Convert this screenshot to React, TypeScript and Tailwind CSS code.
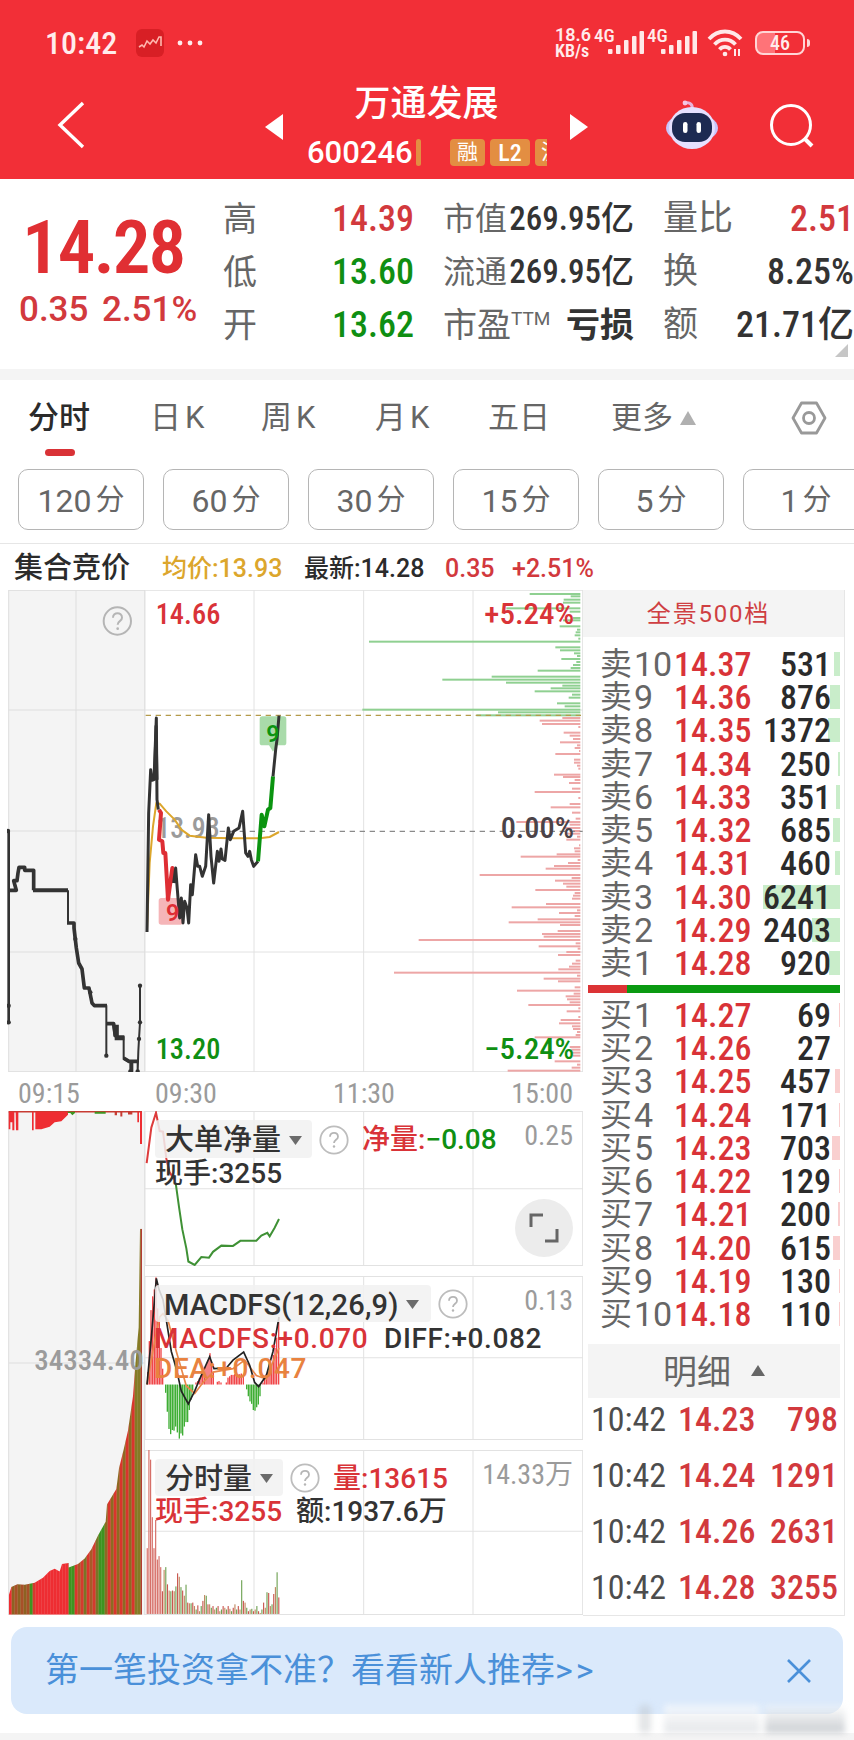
import React from 'react';
import clsx from 'clsx';

const INK = '#333333';
const RED = '#d93338';
const GREEN = '#0f8f12';

const asks: [string, string, number, number][] = [
  ['10', '14.37', 531, 6],
  ['9', '14.36', 876, 10],
  ['8', '14.35', 1372, 12],
  ['7', '14.34', 250, 2],
  ['6', '14.33', 351, 4],
  ['5', '14.32', 685, 7],
  ['4', '14.31', 460, 5],
  ['3', '14.30', 6241, 77],
  ['2', '14.29', 2403, 28],
  ['1', '14.28', 920, 11],
];

const bids: [string, string, number, number][] = [
  ['1', '14.27', 69, 1],
  ['2', '14.26', 27, 0],
  ['3', '14.25', 457, 5],
  ['4', '14.24', 171, 1],
  ['5', '14.23', 703, 8],
  ['6', '14.22', 129, 1],
  ['7', '14.21', 200, 2],
  ['8', '14.20', 615, 7],
  ['9', '14.19', 130, 1],
  ['10', '14.18', 110, 1],
];

const trades: [string, string, number][] = [
  ['10:42', '14.23', 798],
  ['10:42', '14.24', 1291],
  ['10:42', '14.26', 2631],
  ['10:42', '14.28', 3255],
];

// order depth along the price axis: [y, left edge]
const sellDepth = [
  [43, 720], [50, 843], [60, 822], [69, 820], [86, 650], [96, 840], [115, 850], [122, 820], [140, 810],
  [150, 862], [158, 858], [167, 855], [177, 866], [186, 238], [203, 797], [212, 811], [221, 853], [229, 862],
  [238, 815], [247, 860], [256, 850], [265, 843], [273, 744], [291, 606], [300, 458], [309, 649], [318, 818],
  [326, 783], [335, 735], [345, 847], [354, 837], [371, 802], [380, 825], [390, 218], [398, 625], [407, 560],
];

const buyDepth = [
  [415, 818], [423, 750], [433, 757], [442, 866], [459, 822], [468, 840], [478, 850], [488, 811], [497, 862],
  [505, 855], [514, 868], [523, 797], [540, 853], [549, 853], [558, 862], [567, 866], [585, 793], [592, 820],
  [601, 855], [610, 838], [627, 847], [637, 735], [655, 866], [673, 840], [683, 783], [699, 847], [717, 858],
  [727, 680], [735, 840], [745, 820], [754, 850], [762, 830], [771, 862], [780, 830], [797, 868], [806, 853],
  [815, 855], [824, 801], [831, 693], [841, 864], [850, 835], [859, 793], [867, 768], [886, 570], [895, 846],
  [903, 796], [912, 820], [921, 830], [931, 737], [940, 855], [948, 850], [957, 847], [973, 769], [983, 666],
  [992, 862], [1000, 808], [1009, 855], [1019, 744], [1028, 657], [1036, 811], [1054, 804], [1063, 757],
  [1071, 762], [1081, 387], [1091, 858], [1100, 747], [1107, 864], [1117, 830], [1126, 805], [1143, 858],
  [1152, 847], [1161, 838], [1169, 806], [1179, 313], [1188, 862], [1197, 762], [1205, 805], [1223, 855],
  [1233, 682], [1242, 852], [1250, 828], [1259, 832], [1268, 840], [1276, 716], [1286, 866], [1295, 831],
  [1312, 866], [1321, 813], [1331, 808], [1340, 847], [1348, 850], [1357, 862], [1366, 858], [1373, 735],
  [1402, 840], [1410, 845], [1419, 848], [1428, 850], [1445, 795], [1455, 862], [1464, 846], [1473, 654],
];

const volumeTops = [
  1362, 1077, 1105, 1272, 1362, 1280, 1395, 1385, 1417, 1487, 1425, 1417, 1467, 1485, 1487, 1485, 1487, 1473,
  1435, 1445, 1475, 1485, 1500, 1468, 1520, 1522, 1522, 1520, 1530, 1540, 1528, 1545, 1530, 1515, 1498, 1500,
  1525, 1525, 1535, 1530, 1540, 1535, 1530, 1545, 1540, 1530, 1535, 1540, 1530, 1538, 1545, 1535, 1525, 1540,
  1530, 1540, 1455, 1515, 1520, 1535, 1545, 1540, 1538, 1545, 1540, 1530, 1545, 1550, 1540, 1520, 1535, 1490,
  1492, 1530, 1525, 1495, 1475, 1432, 1505,
];

// MACD histogram, [x, end y] around the zero line at 886
const macdBars = [
  [444, 850], [449, 760], [454, 670], [459, 630], [464, 610], [469, 575], [474, 665], [479, 700], [484, 780], [489, 840],
  [498, 910], [503, 965], [508, 1015], [513, 1030], [518, 1018], [523, 1020], [528, 1008], [533, 1025],
  [539, 1043], [544, 1028], [549, 1034], [554, 1008], [559, 995], [564, 995], [569, 960], [574, 930], [579, 905],
  [589, 880], [594, 876], [599, 868], [604, 860], [609, 855], [614, 850], [619, 830], [625, 815], [631, 795],
  [636, 822], [641, 850], [653, 878], [658, 876], [664, 880], [680, 880], [685, 866], [690, 862], [695, 858],
  [700, 858], [705, 856], [710, 856], [715, 856], [720, 856], [725, 854], [731, 860],
  [741, 900], [746, 920], [751, 935], [756, 942], [761, 960], [766, 962], [771, 952], [776, 944], [781, 920],
  [790, 880], [795, 870], [800, 855], [805, 850], [811, 845], [816, 830], [821, 800], [826, 780], [831, 750], [837, 690],
];

const auctionStripes = Array.from({ length: 45 }, (_, i) => {
  const x = 27 + i * 9;
  let fill = ['#d43a2e', '#a85a28', '#d9352c', '#7a7426'][(i * 3) % 4];
  if (x < 33 || (x >= 105 && x < 200)) fill = '#ee2d32';
  else if ((x >= 85 && x < 96) || (x >= 200 && x < 223) || (x >= 295 && x < 311)) fill = '#3e9420';
  else if (x >= 34 && x < 85) fill = i % 2 ? '#8d6222' : '#a85028';
  else if (x >= 311 && x < 400) fill = i % 2 ? '#d9352c' : '#8d6a22';
  else if (x >= 400 && x < 417) fill = '#857a25';
  else if (x >= 417) fill = '#b33c33';
  return { x, fill };
});

interface ChartTextProps {
  x: number;
  y: number;
  width: number;
  size?: number;
  fill: string;
  children: string;
}

const ChartText = ({ x, y, width, size = 86, fill, children }: ChartTextProps) => (
  <text x={x} y={y} fontSize={size} fill={fill} fontWeight={480} textLength={width} lengthAdjust="spacingAndGlyphs">
    {children}
  </text>
);

const Help = ({ className }: { className?: string }) => (
  <svg viewBox="0 0 30 30" className={clsx('size-[30px] shrink-0', className)} fill="none">
    <circle cx="15" cy="15" r="13.7" stroke="#bdbdbd" strokeWidth="1.8" />
    <path d="M11 11.7c0-5.2 8-5.2 8 0 0 3.2-4 3-4 6.3" stroke="#b5b5b5" strokeWidth="1.8" />
    <circle cx="15" cy="21.5" r="1.2" fill="#b5b5b5" />
  </svg>
);

const CaretDown = () => (
  <svg viewBox="0 0 13 9" className="h-[9px] w-[13px] shrink-0">
    <path d="M0 0H13L6.5 9Z" fill="#6b6b6b" />
  </svg>
);

const Signal = () => (
  <svg viewBox="0 0 36 24" className="h-6 w-9 shrink-0" fill="#ffe9e9">
    <rect x="0" y="18" width="4.5" height="5" rx="1" />
    <rect x="8" y="14" width="4.5" height="9" rx="1" />
    <rect x="16" y="9" width="4.5" height="14" rx="1" />
    <rect x="24" y="5" width="4.5" height="18" rx="1" />
    <rect x="31.5" y="0" width="4.5" height="23" rx="1" />
  </svg>
);

const StatusBar = () => (
  <div className="flex h-[86px] items-center pl-[45px] text-[#ffecec]">
    <span className="w-[77px] text-[32px] leading-none font-[480] whitespace-nowrap [font-stretch:87%]">10:42</span>
    <div className="ml-[14px] flex size-7 items-center justify-center rounded-md bg-[#d81f25]">
      <svg viewBox="0 0 24 16" className="h-4 w-6" fill="none" stroke="#ffb9b0" strokeWidth="1.6">
        <path d="M1 12l3-2 2 2 3-6 3 3 3-4 3 3 3-6 2 0v9" />
      </svg>
    </div>
    <svg viewBox="0 0 26 6" className="ml-[13px] h-[6px] w-[26px]" fill="#ffecec">
      <circle cx="3" cy="3" r="2.4" />
      <circle cx="13" cy="3" r="2.4" />
      <circle cx="23" cy="3" r="2.4" />
    </svg>
    <div className="ml-[352px] w-[39px] text-[18px] leading-[16px] font-semibold whitespace-nowrap">
      <div className="[font-stretch:96%]">18.6</div>
      <div>KB/s</div>
    </div>
    <span className="mb-4 w-[14px] text-[19px] leading-none font-medium [font-stretch:80%]">4G</span>
    <Signal />
    <span className="mb-4 ml-[3px] w-[14px] text-[19px] leading-none font-medium [font-stretch:80%]">4G</span>
    <Signal />
    <svg viewBox="0 0 36 28" className="ml-[10px] h-7 w-9 shrink-0" fill="none" stroke="#ffe9e9" strokeWidth="3.8">
      <path d="M2 10C11 0 25 0 34 10" />
      <path d="M7.5 15.5C13.5 9 22.5 9 28.5 15.5" />
      <path d="M12.5 20.5C15.5 17 20.5 17 23.5 20.5" />
      <circle cx="18" cy="25" r="1.6" fill="#ffe9e9" strokeWidth="1.5" />
      <path d="M28 20v7M32 20v7" strokeWidth="2" />
    </svg>
    <div className="ml-[12px] flex h-6 w-[50px] items-center justify-center rounded-lg border-2 border-[#ffd6d6] bg-linear-to-r from-[#ff7378] from-40% to-transparent to-40% text-[20px] leading-none font-medium">
      46
    </div>
    <div className="ml-[2px] h-2 w-[3px] rounded-r bg-[#ffd6d6]" />
  </div>
);

const Robot = () => (
  <svg viewBox="0 0 52 50" className="h-[50px] w-[52px]">
    <path d="M26 9C27 5 24 2 20 3" fill="none" stroke="#e9b2da" strokeWidth="3" strokeLinecap="round" />
    <circle cx="19" cy="3" r="2.4" fill="#f4c6e2" />
    <ellipse cx="26" cy="28" rx="26" ry="15" fill="#c9c4fa" />
    <ellipse cx="26" cy="28" rx="23" ry="21" fill="#e6e0ff" />
    <rect x="6" y="13" width="40" height="29" rx="13" fill="#1d2a52" />
    <rect x="17" y="22" width="4.5" height="11" rx="2.2" fill="#fff" />
    <rect x="30.5" y="22" width="4.5" height="11" rx="2.2" fill="#fff" />
  </svg>
);

const Header = () => (
  <div className="flex h-[93px] items-start">
    <svg viewBox="0 0 28 48" className="mt-[15px] ml-[57px] h-12 w-7" fill="none" stroke="#fff" strokeWidth="3.4">
      <path d="M26 2L3 24L26 46" />
    </svg>
    <svg viewBox="0 0 18 26" className="mt-[28px] ml-[180px] h-[26px] w-[18px]">
      <path d="M18 0V26L0 13Z" fill="#fff" />
    </svg>
    <div className="flex w-[287px] flex-col items-center">
      <div className="text-[36px] leading-[36px] font-medium text-white">万通发展</div>
      <div className="mt-[17px] flex h-[27px] w-full items-center pl-[24px] text-[15px] text-white">
        <span className="w-[100px] text-[31px] leading-none font-[480] whitespace-nowrap [font-stretch:89%]">600246</span>
        <i className="ml-[9px] h-full w-[5px] rounded-sm bg-[#e38e42]" />
        <span className="ml-[29px] flex h-full w-[35px] items-center justify-center rounded-sm bg-[#e38e42] text-[21px]">融</span>
        <span className="ml-[5px] flex h-full w-10 items-center justify-center rounded-sm bg-[#e38e42] text-[24px] font-[480]">L2</span>
        <span className="ml-[5px] flex h-full w-3 items-center overflow-hidden rounded-l-sm bg-[#e38e42] pl-[6px] text-[21px]">沪</span>
      </div>
    </div>
    <svg viewBox="0 0 18 26" className="mt-[28px] h-[26px] w-[18px]">
      <path d="M0 0V26L18 13Z" fill="#fff" />
    </svg>
    <div className="mt-[14px] ml-[78px]">
      <Robot />
    </div>
    <svg viewBox="0 0 46 46" className="mt-[17px] ml-[51px] size-[46px]" fill="none" stroke="#fff" strokeWidth="3">
      <circle cx="22" cy="22" r="19.5" />
      <path d="M36 36L43 43" strokeWidth="4" />
    </svg>
  </div>
);

const Stat = ({ label, value, className }: { label: React.ReactNode; value: string; className: string }) => (
  <div className="flex h-[53px] items-center justify-between">
    <span className="flex items-start leading-none">{label}</span>
    <b className={clsx('leading-none', className)}>{value}</b>
  </div>
);

const Quote = () => (
  <div className="relative flex h-[190px] overflow-hidden bg-white pt-[13px]">
    <div className="w-[223px] shrink-0">
      <div className="mt-[18px] ml-[22px] text-[75px] leading-[74px] font-semibold tracking-[-2px] whitespace-nowrap text-[#e02f33] [font-stretch:80%]">
        14.28
      </div>
      <div className="mt-[7px] ml-[19px] flex text-[35px] leading-[37px] font-[480] text-[#d2393d] [font-stretch:88%]">
        <span className="w-[83px]">0.35</span>
        <span>2.51%</span>
      </div>
    </div>
    <div className="w-[191px] shrink-0 text-[34px] whitespace-nowrap text-[#666]">
      <Stat label="高" value="14.39" className="text-[36px] font-[480] text-[#d2393d]" />
      <Stat label="低" value="13.60" className="text-[36px] font-[480] text-[#0f8f12]" />
      <Stat label="开" value="13.62" className="text-[36px] font-[480] text-[#0f8f12]" />
    </div>
    <div className="ml-[29px] w-[191px] shrink-0 text-[32px] whitespace-nowrap text-[#666]">
      <Stat label="市值" value="269.95亿" className="text-[33px] font-[480] text-[#333]" />
      <Stat label="流通" value="269.95亿" className="text-[33px] font-[480] text-[#333]" />
      <Stat
        label={
          <>
            <span className="text-[34px]">市盈</span>
            <small className="mt-[1px] text-[19px] leading-none [font-stretch:100%]">TTM</small>
          </>
        }
        value="亏损"
        className="text-[34px] font-bold text-[#333]"
      />
    </div>
    <div className="ml-[29px] w-[191px] shrink-0 text-[35px] whitespace-nowrap text-[#666]">
      <Stat label="量比" value="2.51" className="text-[36px] font-[480] text-[#d2393d]" />
      <Stat label="换" value="8.25%" className="text-[36px] font-[480] text-[#333] [font-stretch:87%]" />
      <Stat label="额" value="21.71亿" className="text-[36px] font-[480] text-[#333]" />
    </div>
    <svg viewBox="0 0 13 13" className="absolute right-[6px] bottom-[12px] size-[13px]">
      <path d="M13 0V13H0Z" fill="#c6c6c6" />
    </svg>
  </div>
);

const Tabs = () => (
  <div className="flex h-[89px] items-start pt-[15px] text-[31px] leading-[46px] whitespace-nowrap text-[#666]">
    <div className="ml-[28px] w-[122px] font-medium text-[#2b2b2b]">
      分时
      <div className="mt-[8px] ml-[17px] h-[7px] w-[30px] rounded-full bg-[#d93236]" />
    </div>
    <span className="w-[111px] tracking-[4px] [font-stretch:100%]">日K</span>
    <span className="w-[114px] tracking-[4px] [font-stretch:100%]">周K</span>
    <span className="w-[113px] tracking-[4px] [font-stretch:100%]">月K</span>
    <span className="w-[123px]">五日</span>
    <span className="flex w-[180px] items-center gap-[7px]">
      更多
      <svg viewBox="0 0 16 14" className="h-[14px] w-4">
        <path d="M8 0L16 14H0Z" fill="#b0b0b0" />
      </svg>
    </span>
    <svg viewBox="0 0 36 34" className="mt-[6px] h-[34px] w-9" fill="none" stroke="#999" strokeWidth="2.8">
      <path d="M10.5 2H25.5L34 17L25.5 32H10.5L2 17Z" strokeLinejoin="round" />
      <circle cx="18" cy="17" r="5.5" />
    </svg>
  </div>
);

const Periods = () => (
  <div className="flex h-[75px] gap-[19px] overflow-hidden border-b border-[#e6e6e6] pl-[18px]">
    {['120', '60', '30', '15', '5', '1'].map((n) => (
      <div
        key={n}
        className="flex h-[61px] w-[126px] shrink-0 items-center justify-center rounded-[10px] border border-[#b5b5b5] pt-[2px] text-[32px] text-[#666] [font-stretch:89%]"
      >
        {n}
        <span className="ml-[4px] text-[29px]">分</span>
      </div>
    ))}
  </div>
);

const AuctionPrice = () => (
  <svg viewBox="22 31 414 1446" className="h-[482px] w-[138px]" preserveAspectRatio="none">
    <rect x="27" y="31" width="409" height="1446" fill="#f4f4f4" />
    <path d="M27 31V1477M229 31V1477M435 31V1477M27 32H436M27 391H436M27 754H436M27 1117H436M27 1476H436" stroke="#dedede" strokeWidth="3" />
    <g fill="none" stroke="#333" strokeWidth="6" strokeLinejoin="round">
      <path d="M27 752V1328" strokeWidth="8" />
      <path d="M27 932H50L42 903H52L55 880L58 863H75V872H102V932" strokeWidth="11" />
      <path d="M100 932H205" strokeWidth="12" />
      <path d="M205 932V1030H223L226 1075L230 1105L237 1150L247 1168L254 1225H266L272 1245L277 1270L283 1278H320V1428V1330H340L345 1370H372V1438L385 1445H392V1475H398V1447H414V1475L416 1415L418 1378L421 1328V1218" />
      <path d="M202 1030H223V1045L230 1105L237 1150L247 1168L254 1225H268L277 1270L284 1278H322M320 1332H342L347 1370M352 1335V1372M345 1376H374M372 1435L388 1445H416" strokeWidth="11" />
    </g>
    {[[25, 754], [27, 1278], [27, 1328], [320, 1428], [421, 1218], [421, 1328], [418, 1378], [392, 1475], [414, 1475], [227, 1078], [272, 1238]].map(([x, y]) => (
      <circle key={`${x}-${y}`} cx={x} cy={y} r="6.5" fill={INK} />
    ))}
    <g fill="none" stroke="#b5b5b5" strokeWidth="6">
      <circle cx="353" cy="124" r="41" />
      <path d="M340 114c0-18 27-18 27 0 0 11-13 10-13 21" />
    </g>
    <circle cx="354" cy="147" r="4" fill="#b5b5b5" />
  </svg>
);

const PriceChart = () => (
  <svg viewBox="436 31 1314 1446" className="h-[482px] w-[438px]" preserveAspectRatio="none">
    <path d="M436 31V1477M763 31V1477M1092 31V1477M1420 31V1477M1749 31V1477M436 32H1750M436 391H1750M436 1117H1750M436 1476H1750" stroke="#e2e2e2" strokeWidth="3" />
    {sellDepth.map(([y, x]) => (
      <rect key={y} x={870 + x} y={y - 3} width={872 - x} height="6" fill="#8fd091" />
    ))}
    {buyDepth.map(([y, x]) => (
      <rect key={y} x={870 + x} y={y - 3} width={872 - x} height="6" fill="#eda6a6" />
    ))}
    <path d="M438 407H1749" stroke="#b49a4a" strokeWidth="3.5" strokeDasharray="16 14" />
    <path d="M660 755H1749" stroke="#8a8a8a" strokeWidth="3.5" strokeDasharray="16 14" />
    <ChartText x={470} y={774} width={190} fill="#9b9b9b">13.93</ChartText>
    <path d="M788 410H852Q860 410 860 418V489Q860 497 852 497H832L820 516L808 497H788Q780 497 780 489V418Q780 410 788 410Z" fill="#a9dbaa" />
    <path d="M485 955H497L505 940L513 955H542Q550 955 550 963V1027Q550 1035 542 1035H485Q477 1035 477 1027V963Q477 955 485 955Z" fill="#f5b5b8" />
    <g fill="none" strokeLinejoin="round" strokeWidth="9">
      <path d="M442 1050L450 850L460 740L470 670L480 672L500 695L525 720L545 750L570 768L620 774L700 776L780 776L810 772L838 757" stroke="#dca62c" strokeWidth="6" />
      <path d="M442 1057L447 700L453 570L457 602L463 600L470 415L472 660L476 690" stroke={INK} />
      <path d="M465 600L469 440L472 600" stroke={INK} />
      <path d="M478 690L484 700L478 780L488 785L491 820H497L505 960L518 865L522 910" stroke="#de2e34" strokeWidth="12" />
      <path d="M522 910L528 865L533 930L540 1015L545 955L550 1030L555 965L562 985L567 1030L573 915L578 945L588 825L594 860H600L608 890L618 860L627 705L634 830L642 910L653 815L658 845L664 808L668 838L676 842L686 745L692 780L702 755L718 745L729 695L738 820L745 830L750 815L755 840L762 860L775 845" stroke={INK} />
      <path d="M775 845L786 705L794 740L805 690L812 685L820 590" stroke="#0b9410" strokeWidth="12" />
      <path d="M820 590L828 510L832 480L838 408" stroke={INK} />
    </g>
    <text x="800" y="487" fontSize="70" fontWeight="600" fill="#0b9410" className="[font-stretch:100%]">9</text>
    <text x="499" y="1024" fontSize="70" fontWeight="600" fill="#de2e34" className="[font-stretch:100%]">9</text>
    <ChartText x={468} y={133} width={194} fill={RED}>14.66</ChartText>
    <ChartText x={468} y={1437} width={194} fill={GREEN}>13.20</ChartText>
    <ChartText x={1454} y={133} width={270} fill={RED}>+5.24%</ChartText>
    <ChartText x={1503} y={774} width={220} fill="#4b4348">0.00%</ChartText>
    <ChartText x={1454} y={1437} width={270} fill={GREEN}>−5.24%</ChartText>
  </svg>
);

const AuctionVolume = () => (
  <svg viewBox="22 92 414 1464" className="h-[504px] w-[138px]" preserveAspectRatio="none">
    <defs>
      <clipPath id="auction">
        <path d="M27 1555V1500L35 1475L53 1467L75 1468L105 1462L130 1448L150 1428L165 1422L180 1430L187 1408L207 1405V1418L235 1408L255 1392L275 1365L295 1325L318 1285L322 1235L350 1190L358 1130L372 1075L385 1020L400 920L407 830L417 720L421 434H427V1555Z" />
      </clipPath>
    </defs>
    <rect x="27" y="92" width="409" height="1464" fill="#f4f4f4" />
    <path d="M27 92V1556M229 92V1556M435 92V1556M27 824H436" stroke="#dedede" strokeWidth="3" />
    <g clipPath="url(#auction)">
      {auctionStripes.map((s) => (
        <rect key={s.x} x={s.x} y="430" width="9.5" height="1126" fill={s.fill} />
      ))}
    </g>
    <path d="M27 94H427" stroke="#c73b32" strokeWidth="4" />
    <path d="M27 94H44V148H38V125H32V145H27ZM48 94H56V148H49ZM97 94H102V148H97ZM107 94H205V103L185 122L165 125L150 138L125 145H107ZM413 94H418V125H413ZM421 94H427V188H421Z" fill="#ee2d32" />
    <path d="M204 94H226V98L218 104L212 98H204ZM285 94H318V100H285Z" fill="#3e9420" />
    <path d="M345 94H352V104H345ZM362 94H368V108H362ZM385 94H398V102H385Z" fill="#c73b32" />
    <ChartText x={104} y={843} width={328} size={82} fill="#9b9b9b">34334.40</ChartText>
  </svg>
);

interface PanelProps {
  viewBox: string;
  mid: number;
  className: string;
  chart: React.ReactNode;
  children: React.ReactNode;
}

const Panel = ({ viewBox, mid, className, chart, children }: PanelProps) => {
  const [, top, , height] = viewBox.split(' ').map(Number);
  return (
    <div className={clsx('relative w-[438px]', className)}>
      <svg viewBox={viewBox} className="size-full" preserveAspectRatio="none">
        <path
          d={`M436 ${top + 1.5}H1750M436 ${mid}H1750M436 ${top + height - 1.5}H1750M436 ${top}v${height}M763 ${top}v${height}M1092 ${top}v${height}M1420 ${top}v${height}M1749 ${top}v${height}`}
          stroke="#e2e2e2"
          strokeWidth="3"
          fill="none"
        />
        {chart}
      </svg>
      <div className="absolute inset-0 pt-[1px] text-[28px] leading-[30px] font-[480] whitespace-nowrap [font-stretch:91%]">{children}</div>
    </div>
  );
};

const NetChart = () => (
  <Panel
    viewBox="436 92 1314 449"
    mid={317}
    className="h-[155px]"
    chart={
      <g fill="none" strokeWidth="6">
        <path d="M441 243L455 140L469 97L480 150L490 152L500 230L510 270L524 290" stroke="#dd3c3c" />
        <path d="M528 300L538 370L548 435L560 490L566 528L585 538L605 515L628 517L640 500L665 482L700 483L722 468L770 468L785 453L803 445L810 455L825 430L838 405" stroke="#3f9135" />
      </g>
    }
  >
    <div className="flex pt-[8px] pl-[10px]">
      <div className="flex h-[38px] w-[157px] items-center gap-[8px] rounded bg-[#f1f1f1]/85 pt-[2px] pl-[10px] text-[29px] text-[#333]">
        大单净量
        <CaretDown />
      </div>
      <Help className="mt-[5px] ml-[7px]" />
      <span className="mt-[5px] ml-[13px] text-[#d93338]">净量:</span>
      <span className="mt-[5px] text-[#0f8f12]">−0.08</span>
      <span className="mt-[1px] mr-[10px] ml-auto font-normal text-[#9b9b9b] [font-stretch:86%]">0.25</span>
    </div>
    <div className="pt-[1px] pl-[10px] text-[#333]">现手:3255</div>
    <div className="absolute right-[10px] bottom-[9px] flex size-[58px] items-center justify-center rounded-full bg-[#ececec]">
      <svg viewBox="0 0 32 32" className="size-8" fill="none" stroke="#666" strokeWidth="3">
        <path d="M3 15V3H15M29 17V29H17" />
      </svg>
    </div>
  </Panel>
);

const MacdChart = () => (
  <Panel
    viewBox="436 571 1314 476"
    mid={808}
    className="h-[164px]"
    chart={
      <>
        {macdBars.map(([x, y]) => (
          <rect key={x} x={x - 2} y={Math.min(y, 886)} width="4" height={Math.abs(y - 886)} fill={y > 886 ? '#3fae35' : '#f0474a'} />
        ))}
        <g fill="none" strokeWidth="5">
          <path d="M442 886L465 760L480 690L490 680L505 700L530 790L560 890L585 912L610 880L640 850L700 840L735 815L770 860L800 870L820 820L838 780" stroke="#e9874a" />
          <path d="M442 886L455 750L470 578L478 610L490 640L500 700L515 790L530 840L545 905L566 942L585 905L600 870L630 805L643 840L680 838L700 815L732 792L750 830L765 880L777 892L800 860L820 790L838 690" stroke="#222" />
        </g>
      </>
    }
  >
    <div className="flex pt-[8px] pl-[10px]">
      <div className="flex h-[37px] w-[276px] items-center rounded bg-[#f1f1f1]/85 pt-[2px] pl-[9px] text-[29px] text-[#333]">
        <span className="w-[242px] tracking-[0.2px] [font-stretch:100%]">MACDFS(12,26,9)</span>
        <CaretDown />
      </div>
      <Help className="mt-[4px] ml-[7px]" />
      <span className="mt-[1px] mr-[10px] ml-auto font-normal text-[#9b9b9b] [font-stretch:86%]">0.13</span>
    </div>
    <div className="flex pt-[2px] pl-[9px] tracking-[0.6px] [font-stretch:100%]">
      <span className="w-[230px] text-[#d93338]">MACDFS:+0.070</span>
      <span className="text-[#333]">DIFF:+0.082</span>
    </div>
    <div className="pl-[9px] tracking-[0.6px] text-[#e8823f] [font-stretch:100%]">DEA:+0.047</div>
  </Panel>
);

const VolumeChart = () => (
  <Panel
    viewBox="436 1077 1314 479"
    mid={1313}
    className="h-[165px]"
    chart={volumeTops.map((y, i) => (
      <rect key={i} x={441 + i * 5.06} y={y} width="3.4" height={1553 - y} fill={i < 9 ? '#d56a63' : ['#c9564e', '#6fa253', '#c08a62'][(i * 5) % 3]} />
    ))}
  >
    <div className="flex pt-[8px] pl-[10px]">
      <div className="flex h-[37px] w-[128px] items-center gap-[8px] rounded bg-[#f1f1f1]/85 pt-[2px] pl-[10px] text-[29px] text-[#333]">
        分时量
        <CaretDown />
      </div>
      <Help className="mt-[4px] ml-[7px]" />
      <span className="mt-[5px] ml-[13px] text-[#d93338]">量:13615</span>
      <span className="mt-[1px] mr-[10px] ml-auto font-normal text-[#9b9b9b] [font-stretch:85%]">14.33万</span>
    </div>
    <div className="flex gap-[14px] pt-[1px] pl-[10px]">
      <span className="text-[#d93338]">现手:3255</span>
      <span className="text-[#333]">额:1937.6万</span>
    </div>
  </Panel>
);

const Ladder = ({ side, rows, tint }: { side: string; rows: typeof asks; tint: string }) => (
  <div className="flex flex-col">
    {rows.map(([level, price, volume, bar]) => (
      <div key={level} className="relative flex h-[33.3px] items-center text-[34px] leading-none">
        <div className={clsx('absolute right-0 h-6', tint)} style={{ width: bar }} />
        <span className="ml-[12px] w-[34px] text-[32px] text-[#666]">{side}</span>
        <span className="w-[40px] text-[#666] [font-stretch:88%]">{level}</span>
        <span className="w-[76px] font-[480] text-[#d93338]">{price}</span>
        <span className="relative mr-[9px] ml-auto font-[480] text-[#2b2b2b]">{volume}</span>
      </div>
    ))}
  </div>
);

const OrderBook = () => (
  <div className="flex h-[1026px] w-[262px] flex-col border-r border-b border-[#e6e6e6]">
    <div className="flex h-[47px] items-center justify-center bg-[#f4f4f4] pr-[10px] text-[24px] tracking-[1.8px] text-[#cf3f42] [font-stretch:100%]">
      全景500档
    </div>
    <div className="mt-[10px] mr-[4px] ml-[5px]">
      <Ladder side="卖" rows={asks} tint="bg-[#c9edca]" />
      <div className="mt-[5px] flex h-2">
        <div className="w-[39px] bg-[#dc3335]" />
        <div className="flex-1 bg-[#0a9a12]" />
      </div>
      <div className="mt-[5px]">
        <Ladder side="买" rows={bids} tint="bg-[#f9cfcf]" />
      </div>
      <div className="mt-[13px] flex h-[54px] items-center justify-center gap-[20px] bg-[#f4f4f4] text-[34px] text-[#666]">
        <span className="pt-1">明细</span>
        <svg viewBox="0 0 14 11" className="h-[11px] w-[14px]">
          <path d="M7 0L14 11H0Z" fill="#666" />
        </svg>
      </div>
      <div className="-mt-[7px]">
        {trades.map(([time, price, volume]) => (
          <div key={volume} className="flex h-14 items-center pr-[2px] pl-[3px] text-[34px] leading-none font-[480] text-[#d2393d]">
            <span className="w-[87px] font-[450] text-[#4d4d4d]">{time}</span>
            <span>{price}</span>
            <span className="ml-auto">{volume}</span>
          </div>
        ))}
      </div>
    </div>
  </div>
);

const Banner = () => (
  <div className="mt-[11px] ml-[11px] flex h-[87px] w-[832px] items-center rounded-2xl bg-[#dae9fb] pr-8 pl-[34px] text-[34px] whitespace-nowrap text-[#4a90d9]">
    第一笔投资拿不准？看看新人推荐
    <span className="tracking-[3px] [font-stretch:100%]">&gt;&gt;</span>
    <svg viewBox="0 0 24 24" className="ml-auto size-6" fill="none" stroke="#4a90d9" strokeWidth="2.6">
      <path d="M1 1L23 23M23 1L1 23" />
    </svg>
  </div>
);

export default function App() {
  return (
    <div className="relative h-[1740px] w-[854px] overflow-hidden bg-white [font-family:Roboto,'Noto_Sans_CJK_SC',sans-serif] [font-stretch:86%]">
      <div className="h-[179px] bg-[#f22f37]">
        <StatusBar />
        <Header />
      </div>
      <Quote />
      <div className="h-[11px] bg-[#f4f4f4]" />
      <Tabs />
      <Periods />
      <div className="flex h-[46px] items-center pt-[3px] pl-[14px] text-[25px] font-[480] whitespace-nowrap text-[#2b2b2b] [font-stretch:97%]">
        <span className="w-[148px] text-[29px] font-medium">集合竞价</span>
        <span className="w-[142px] text-[#dca62c]">均价:13.93</span>
        <span className="w-[141px]">最新:14.28</span>
        <span className="w-[67px] text-[#d2393d]">0.35</span>
        <span className="text-[#d2393d]">+2.51%</span>
      </div>
      <div className="flex">
        <div className="w-[583px]">
          <div className="flex pl-[7px]">
            <AuctionPrice />
            <PriceChart />
          </div>
          <div className="flex h-[39px] items-center pt-[4px] pl-[18px] text-[28px] text-[#9b9b9b]">
            <span className="w-[137px]">09:15</span>
            <span className="w-[178px]">09:30</span>
            <span>11:30</span>
            <span className="mr-[10px] ml-auto">15:00</span>
          </div>
          <div className="flex pl-[7px]">
            <AuctionVolume />
            <div className="flex flex-col gap-[10px]">
              <NetChart />
              <MacdChart />
              <VolumeChart />
            </div>
          </div>
        </div>
        <OrderBook />
      </div>
      <Banner />
      <div className="mt-[19px] h-2 bg-[#f4f4f4]" />
      <div className="absolute right-[9px] bottom-[7px] flex h-7 w-[206px] gap-[5px] blur-[3px]">
        <i className="w-3 rounded bg-[#b9bec4]/40" />
        <i className="ml-2 w-24 bg-linear-to-b from-white/70 to-[#c9ced4]/50" />
        <i className="flex-1 bg-linear-to-b from-white/50 to-[#b4b9bf]/70" />
      </div>
    </div>
  );
}
